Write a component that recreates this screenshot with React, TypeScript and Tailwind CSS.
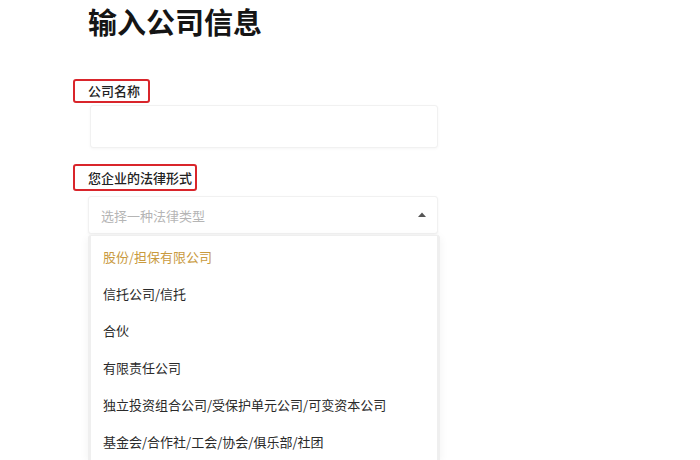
import React from "react";

const items = [
  "股份/担保有限公司",
  "信托公司/信托",
  "合伙",
  "有限责任公司",
  "独立投资组合公司/受保护单元公司/可变资本公司",
  "基金会/合作社/工会/协会/俱乐部/社团",
];

export default function App() {
  return (
    <div
      className="w-[700px] h-[460px] overflow-hidden bg-white"
      style={{ fontFamily: '"Noto Sans CJK SC", "Noto Sans", sans-serif' }}
    >
      <div className="flex h-full w-[441px] flex-col pl-[88px]">
        <h1 className="text-[29px] font-bold leading-[42px] text-[#151515]">输入公司信息</h1>

        <div className="mt-[37px] -ml-[15px] flex h-[24px] w-[77px] items-center rounded-[3px] border-2 border-[#d9252b] pl-[13px] text-[13px] font-medium leading-none text-[#222]">
          公司名称
        </div>
        <div className="mt-[2px] ml-[2px] h-[44px] w-[348px] rounded-[3px] border border-[#f1f1f1] bg-white shadow-[0_1px_3px_rgba(0,0,0,0.04)]" />

        <div className="mt-[16px] -ml-[15px] flex h-[27px] w-[124px] items-center rounded-[3px] border-2 border-[#d9252b] pl-[13px] text-[13px] font-medium leading-none text-[#222]">
          您企业的法律形式
        </div>
        <div className="mt-[5px] flex h-[38px] w-[350px] items-center justify-between rounded-[3px] border border-[#f1f1f1] bg-white pl-[12px] pr-[11px] shadow-[0_1px_3px_rgba(0,0,0,0.05)]">
          <span className="text-[13px] leading-none text-[#b5b5b5]">选择一种法律类型</span>
          <svg width="8" height="5" viewBox="0 0 8 5" className="mb-[1px]">
            <path d="M0 5 L4 0.5 L8 5 Z" fill="#555" />
          </svg>
        </div>

        <div className="mt-[1px] flex w-[352px] flex-1 flex-col rounded-t-[3px] border-x-[3px] border-t border-[#efefef] bg-white pt-[2px] shadow-[0_2px_10px_rgba(0,0,0,0.06)]">
          {items.map((t, i) => (
            <div
              key={t}
              className={
                "flex h-[37px] shrink-0 items-center pl-[12px] text-[13px] leading-none " +
                (i === 0 ? "text-[#c99a3e]" : "text-[#2a2a2a]")
              }
            >
              {t}
            </div>
          ))}
        </div>
      </div>
    </div>
  );
}
